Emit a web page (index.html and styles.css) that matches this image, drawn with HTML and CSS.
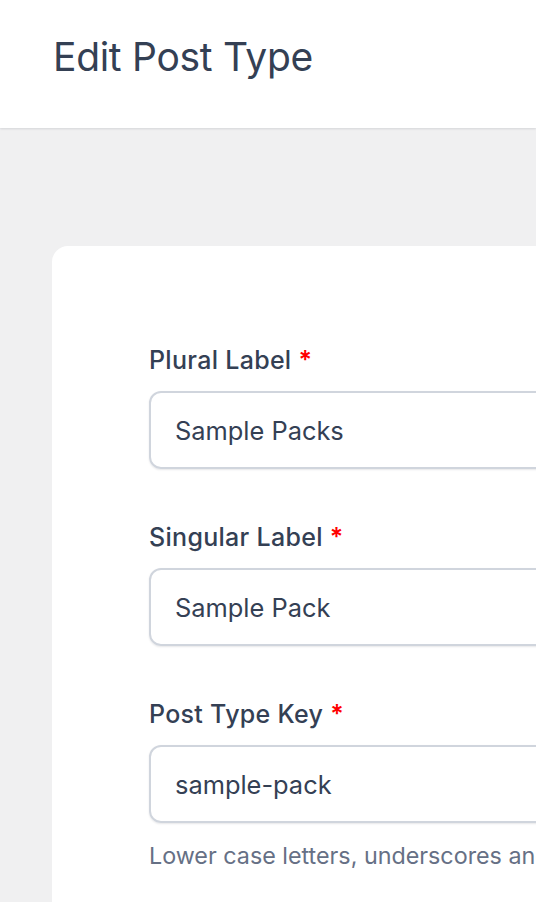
FILE: index.html
```html
<!DOCTYPE html>
<html lang="en">
<head>
<meta charset="utf-8">
<title>Edit Post Type</title>
<link rel="stylesheet" href="styles.css">
</head>
<body>
<header class="topbar">
  <h1 class="page-title">Edit Post Type</h1>
</header>
<main class="main">
  <section class="card">
    <div class="field">
      <label class="field-label">Plural Label <span class="req">*</span></label>
      <div class="input">Sample Packs</div>
    </div>
    <div class="field">
      <label class="field-label">Singular Label <span class="req">*</span></label>
      <div class="input">Sample Pack</div>
    </div>
    <div class="field">
      <label class="field-label">Post Type Key <span class="req">*</span></label>
      <div class="input">sample-pack</div>
      <p class="help">Lower case letters, underscores and dashes only, Max 20 characters.</p>
    </div>
  </section>
</main>
</body>
</html>
```

FILE: styles.css
```css
* { box-sizing: border-box; }
html, body {
  margin: 0;
  padding: 0;
  background: #f0f0f1;
  font-family: Inter, "Noto Sans", sans-serif;
  color: #344054;
  overflow: hidden;
}
.topbar {
  height: 128px;
  background: #fff;
  box-shadow: 0 1px 2px rgba(16, 24, 40, 0.12);
  display: flex;
  align-items: center;
  padding: 0 0 14px 53px;
  position: relative;
}
.page-title {
  margin: 0;
  font-size: 39px;
  line-height: 48px;
  font-weight: 400;
  color: #344054;
  white-space: nowrap;
  letter-spacing: -0.3px;
}
.main {
  padding: 118px 0 0 52px;
}
.card {
  background: #fff;
  border-radius: 16px 0 0 0;
  padding: 99px 0 200px 97px;
  width: 700px;
}
.field {
  display: flex;
  flex-direction: column;
  margin-bottom: 53px;
}
.field-label {
  font-size: 25px;
  line-height: 30px;
  font-weight: 500;
  letter-spacing: 0.3px;
  color: #344054;
  margin-bottom: 16px;
  white-space: nowrap;
}
.req {
  color: #f00;
  font-weight: 600;
}
.input {
  height: 78px;
  border: 2px solid #d0d5dd;
  border-radius: 12px;
  box-shadow: 0 1px 2px rgba(16, 24, 40, 0.1);
  padding: 0 24px;
  display: flex;
  align-items: center;
  font-size: 25.4px;
  color: #344054;
  white-space: nowrap;
}
.help {
  margin: 18px 0 0;
  font-size: 23.3px;
  line-height: 30px;
  color: #667085;
  white-space: nowrap;
}
```
